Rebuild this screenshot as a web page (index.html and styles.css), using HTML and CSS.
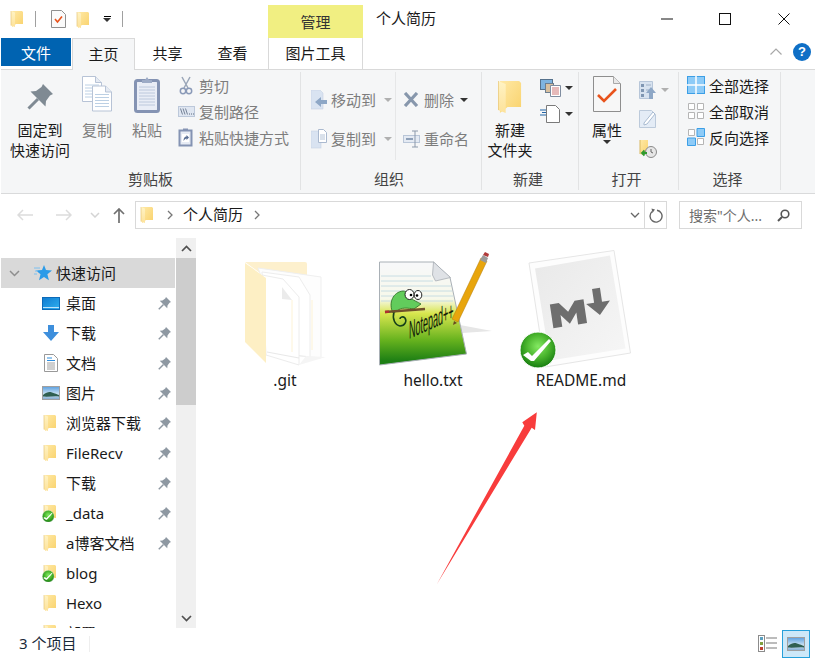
FILE: index.html
```html
<!DOCTYPE html>
<html lang="zh-CN">
<head>
<meta charset="utf-8">
<title>个人简历</title>
<link rel="stylesheet" href="styles.css">
</head>
<body>
<svg class="defs" aria-hidden="true">
  <defs>
    <linearGradient id="fold" x1="0" y1="0" x2="1" y2="1"><stop offset="0" stop-color="#ffe9a6"/><stop offset="1" stop-color="#f9d26c"/></linearGradient>
    <linearGradient id="flap" x1="0" y1="0" x2="0" y2="1"><stop offset="0" stop-color="#fff3c4"/><stop offset="1" stop-color="#fde29a"/></linearGradient>
    <radialGradient id="ball" cx=".5" cy=".4" r=".6"><stop offset="0" stop-color="#84ea62"/><stop offset=".55" stop-color="#48b32c"/><stop offset="1" stop-color="#167c10"/></radialGradient>
    <linearGradient id="npp" x1="0" y1="0" x2="0" y2="1"><stop offset="0" stop-color="#f7f8fa"/><stop offset=".36" stop-color="#f7f8ea"/><stop offset=".5" stop-color="#d8e64e"/><stop offset=".76" stop-color="#66b21e"/><stop offset=".96" stop-color="#1d7f14"/></linearGradient>
    <linearGradient id="mdbg" x1="0" y1="0" x2="1" y2="1"><stop offset="0" stop-color="#e9e9e9"/><stop offset="1" stop-color="#f6f6f6"/></linearGradient>
    <linearGradient id="desk" x1="0" y1="0" x2="1" y2="1"><stop offset="0" stop-color="#0f7bd0"/><stop offset="1" stop-color="#2fb0f0"/></linearGradient>
    <linearGradient id="sky" x1="0" y1="0" x2="0" y2="1"><stop offset="0" stop-color="#5a9fe0"/><stop offset=".6" stop-color="#cfe4f2"/><stop offset="1" stop-color="#7fa8d0"/></linearGradient>
    <symbol id="folder" viewBox="0 0 18 18">
      <path d="M3 1h10l1 1v12H7L3 17z" fill="url(#fold)"/>
      <path d="M2 1l4 1.5V17l-4-1.5z" fill="url(#flap)"/>
      <path d="M2 1v14.5" stroke="#e6c57a" stroke-width=".7" fill="none"/>
    </symbol>
    <symbol id="pin" viewBox="0 0 26 26">
      <path d="M16 0l10 10-3 1.5-4 5.5-.5 5.5L3.500 7.500 9 7l5.500-4z" fill="currentColor"/>
      <path d="M11 15L1.500 24.500" stroke="currentColor" stroke-width="3" fill="none"/>
    </symbol>
    <symbol id="badge" viewBox="0 0 38 38">
      <circle cx="19" cy="19" r="18" fill="url(#ball)" stroke="#fff" stroke-width="1"/>
      <path d="M4 24l5-3 4 4L30 8l2 2-17 20h-3z" fill="#fff"/>
    </symbol>
    <symbol id="doc" viewBox="0 0 20 26">
      <path d="M.5.500h13l6 6v19H.5z" fill="#fff" stroke="#b7c3d6"/>
      <path d="M13.500.5v6h6" fill="#e6ebf3" stroke="#b7c3d6"/>
      <path d="M3 9h14M3 12h14M3 15h14M3 18h14M3 21h14" stroke="#bcd0e4"/>
    </symbol>
    <symbol id="photo" viewBox="0 0 18 14">
      <rect x=".5" y=".5" width="17" height="13" fill="url(#sky)" stroke="#a0a0a0"/>
      <path d="M1 9c4-3 6-3.500 9-2.500 3 .8 5 2 7 2.500v1.500C12 10 6 11 1 10.500z" fill="#2f5f50"/>
    </symbol>
    <symbol id="grid-on" viewBox="0 0 18 18">
      <rect x=".5" y=".5" width="17" height="17" fill="#8ecbf7" stroke="#3c9fe6"/>
      <path d="M9 0v18M0 9h18" stroke="#fff" stroke-width="1.500"/>
    </symbol>
  </defs>
</svg>

<div class="window">
  <header class="titlebar">
    <svg class="qa-folder"><use href="#folder"/></svg>
    <span class="qa-sep"></span>
    <svg class="qa-prop" viewBox="0 0 15 18"><path d="M.5.500h10l4 4v13H.5z" fill="#fafafa" stroke="#8f8f8f"/><path d="M4 9l2.500 3L11 6.500" fill="none" stroke="#e8531c" stroke-width="1.600"/></svg>
    <svg class="qa-folder2"><use href="#folder"/></svg>
    <span class="qa-more"><span class="qa-bar"></span><span class="caret dark"></span></span>
    <span class="qa-sep second"></span>
    <div class="tool-head">管理</div>
    <div class="win-title">个人简历</div>
    <div class="win-controls">
      <span class="win-btn"><svg width="12" height="12" viewBox="0 0 12 12"><path d="M0 6h12" stroke="#111"/></svg></span>
      <span class="win-btn"><svg width="12" height="12" viewBox="0 0 12 12"><rect x=".5" y=".5" width="11" height="11" fill="none" stroke="#111"/></svg></span>
      <span class="win-btn"><svg width="12" height="12" viewBox="0 0 12 12"><path d="M.5.500l11 11M11.500.500l-11 11" stroke="#111"/></svg></span>
    </div>
  </header>

  <nav class="tabs">
    <span class="tab tab-file">文件</span>
    <span class="tab tab-active">主页</span>
    <span class="tab">共享</span>
    <span class="tab">查看</span>
    <span class="tab tab-tool">图片工具</span>
    <span class="tabs-right">
      <svg width="12" height="7" viewBox="0 0 12 7"><path d="M.5 6.500L6 1l5.500 5.500" fill="none" stroke="#a8a8a8" stroke-width="1.200"/></svg>
      <span class="help">?</span>
    </span>
  </nav>

  <section class="ribbon">
    <div class="group g-clip">
      <div class="group-body">
        <div class="big b-pin">
          <span class="big-ico"><svg class="pin-lg"><use href="#pin"/></svg></span>
          <span class="big-text">固定到<br>快速访问</span>
        </div>
        <div class="big b-copy off">
          <span class="big-ico">
            <svg width="30" height="36" viewBox="0 0 30 36"><use href="#doc" x="0" y="0" width="20" height="26"/><use href="#doc" x="10" y="9" width="20" height="27"/></svg>
          </span>
          <span class="big-text">复制</span>
        </div>
        <div class="big b-paste off">
          <span class="big-ico">
            <svg width="26" height="37" viewBox="0 0 26 37"><rect x="1.500" y="4.500" width="23" height="31" rx="2" fill="#e9edf6" stroke="#8493b3" stroke-width="3"/><path d="M5 11h16M5 14h16M5 17h16M5 20h16M5 23h16M5 26h16M5 29h16" stroke="#bcc8dc"/><path d="M8 7V4h3l2-3 2 3h3v3z" fill="#9dabc6"/></svg>
          </span>
          <span class="big-text">粘贴</span>
        </div>
        <div class="col c-clip off">
          <div class="mini">
            <span class="mini-ico"><svg width="16" height="19" viewBox="0 0 16 19"><path d="M4 1l6 11M12 1L6 12" stroke="#9aa6b8" stroke-width="1.500" fill="none"/><circle cx="5" cy="15" r="2.700" fill="none" stroke="#8a9ab8" stroke-width="1.500"/><circle cx="11" cy="15" r="2.700" fill="none" stroke="#8a9ab8" stroke-width="1.500"/></svg></span>
            <span>剪切</span>
          </div>
          <div class="mini">
            <span class="mini-ico"><svg width="17" height="11" viewBox="0 0 17 11"><rect x=".5" y=".5" width="16" height="10" fill="#dfe6f1" stroke="#bcc8da"/><path d="M2.500 2.500l2 6M5 2.500l2 6M7.500 2.500l2 6" stroke="#5a6a80" stroke-width=".8"/><path d="M11 8h1M13 8h1M15 8h1" stroke="#5a6a80"/></svg></span>
            <span>复制路径</span>
          </div>
          <div class="mini">
            <span class="mini-ico"><svg width="16" height="20" viewBox="0 0 16 20"><rect x="1.500" y="3.500" width="12" height="15" fill="#e6ebf4" stroke="#8493b3" stroke-width="2"/><path d="M5 3V1.500h5V3z" fill="#8493b3"/><rect x="4" y="7" width="7" height="8" fill="#fff"/><path d="M5.500 14c0-3 1-4.500 3-4.500V8l2.500 2.500L8.500 13v-1.500c-1 0-2 1-3 2.500z" fill="#5a6f94"/></svg></span>
            <span>粘贴快捷方式</span>
          </div>
        </div>
      </div>
      <div class="group-label">剪贴板</div>
    </div>

    <div class="group g-org">
      <div class="group-body">
        <div class="col c-org off">
          <div class="mini tall">
            <span class="org-ico"><svg width="16" height="20" viewBox="0 0 16 20"><path d="M0 0h9l3 3v16H0z" fill="#d9e3f1" stroke="#c6d2e3" stroke-width=".6"/><path d="M16 10h-6V7l-6 5 6 5v-3h6z" fill="#8ea7c6"/></svg></span>
            <span>移动到</span><span class="caret"></span>
          </div>
          <div class="mini tall">
            <span class="org-ico"><svg width="16" height="20" viewBox="0 0 16 20"><rect x="0" y="2" width="10" height="17" fill="#d9e3f1" stroke="#c6d2e3" stroke-width=".6"/><path d="M7.500.500h5l3 3v10h-8z" fill="#fff" stroke="#aab9cf"/><path d="M9 6h5M9 8h5M9 10h5" stroke="#b4c3d6"/></svg></span>
            <span>复制到</span><span class="caret"></span>
          </div>
        </div>
        <div class="col c-org2 off">
          <div class="mini tall">
            <span class="del-ico"><svg width="16" height="15" viewBox="0 0 16 15"><path d="M2 1l12 13M14 1L2 14" stroke="#8797ac" stroke-width="3.200"/></svg></span>
            <span>删除</span><span class="caret dark gap"></span>
          </div>
          <div class="mini tall">
            <span class="del-ico"><svg width="18" height="18" viewBox="0 0 18 18"><rect x=".5" y="5.500" width="16" height="7" fill="#e4eaf3" stroke="#b9c6d8"/><path d="M3 9h7" stroke="#8ea0b8" stroke-width="2"/><path d="M9 1h6M12 1v16M9 17h6" stroke="#8c99ab" fill="none"/></svg></span>
            <span>重命名</span>
          </div>
        </div>
      </div>
      <div class="group-label">组织</div>
    </div>

    <div class="group g-new">
      <div class="group-body">
        <div class="big b-new">
          <span class="big-ico"><svg class="folder-lg" viewBox="2 1 13 17" preserveAspectRatio="none"><use href="#folder" x="0" y="0" width="18" height="18"/></svg></span>
          <span class="big-text">新建<br>文件夹</span>
        </div>
        <div class="col c-new">
          <div class="mini icon-row">
            <svg width="21" height="18" viewBox="0 0 21 18"><rect x=".5" y=".5" width="12" height="10" fill="#7fb4e0" stroke="#55718c"/><rect x="5.500" y="4.500" width="8" height="9" fill="#d8c0a0" stroke="#6e7f90"/><path d="M10.500 6.500h10v11h-10z" fill="#fff" stroke="#7f8da0"/><path d="M12 9h7M12 11h7M12 13h7M12 15h7" stroke="#c05050" stroke-width=".8"/></svg>
            <span class="caret dark"></span>
          </div>
          <div class="mini icon-row">
            <svg width="21" height="18" viewBox="0 0 21 18"><path d="M6.500.500h9l4 4v13h-13z" fill="#fff" stroke="#7a7a7a"/><path d="M0 5h6M2 7.500h4M0 10h6" stroke="#2466a8" stroke-width="1.200"/></svg>
            <span class="caret dark"></span>
          </div>
        </div>
      </div>
      <div class="group-label">新建</div>
    </div>

    <div class="group g-open">
      <div class="group-body">
        <div class="big b-prop">
          <span class="big-ico">
            <svg width="28" height="36" viewBox="0 0 28 36"><path d="M.5.500h20l7 7v28H.5z" fill="#f7f7f7" stroke="#8e8e8e"/><path d="M20.500.5v7h7" fill="#e8e8e8" stroke="#a8a8a8"/><path d="M5 19l6 6L23 13" fill="none" stroke="#e8531c" stroke-width="2.600"/></svg>
          </span>
          <span class="big-text">属性</span>
          <span class="caret dark prop-caret"></span>
        </div>
        <div class="col c-open off">
          <div class="mini open-row">
            <svg width="18" height="18" viewBox="0 0 18 18"><path d="M.5.500h13v17H.5z" fill="#d7e2ef" stroke="#b7c6d9"/><path d="M2 3h3v3H2zM2 8h3v3H2zM2 13h3v3H2z" fill="#7f96b2"/><path d="M7 4h5M7 9h3" stroke="#9eb0c6"/><path d="M12 6l5 6h-3v6h-4v-6H7z" fill="#8ea7c6"/></svg>
            <span class="caret"></span>
          </div>
          <div class="mini open-row">
            <svg width="18" height="18" viewBox="0 0 18 18"><path d="M.5.500h12l4 4v13H.5z" fill="#e4ecf6" stroke="#bccadb"/><path d="M5 13L14 2l2 2-8 10-3 1z" fill="#fff" stroke="#a9bbd1"/></svg>
          </div>
          <div class="mini open-row">
            <svg width="18" height="18" viewBox="0 0 18 18"><path d="M1 0h8v11l-5 4-3-1z" fill="url(#fold)"/><path d="M1 0v14" stroke="#d8b860"/><circle cx="12" cy="12" r="5.500" fill="#e6e6e6" stroke="#8a8a8a"/><path d="M12 9v3l2 1" stroke="#666" fill="none"/><path d="M3 13h5M5.500 10.500L3 13l2.500 2.500" stroke="#2f9a2f" stroke-width="1.800" fill="none"/></svg>
          </div>
        </div>
      </div>
      <div class="group-label">打开</div>
    </div>

    <div class="group g-sel">
      <div class="group-body">
        <div class="col c-sel">
          <div class="mini on">
            <span class="sel-ico"><svg width="18" height="18"><use href="#grid-on"/></svg></span>
            <span>全部选择</span>
          </div>
          <div class="mini on">
            <span class="sel-ico"><svg width="18" height="18" viewBox="0 0 18 18"><path d="M1.500 1.500h6v6h-6zM10.500 1.500h6v6h-6zM1.500 10.500h6v6h-6zM10.500 10.500h6v6h-6z" fill="#fff" stroke="#b5b5b5"/></svg></span>
            <span>全部取消</span>
          </div>
          <div class="mini on">
            <span class="sel-ico"><svg width="18" height="18" viewBox="0 0 18 18"><path d="M1.500 1.500h6v6h-6zM10.500 10.500h6v6h-6z" fill="#fff" stroke="#b5b5b5"/><path d="M10 .5h7.500v8H10zM.5 10h8v7.500h-8z" fill="#8ecbf7" stroke="#3c9fe6"/></svg></span>
            <span>反向选择</span>
          </div>
        </div>
      </div>
      <div class="group-label">选择</div>
    </div>
  </section>

  <div class="addr-row">
    <span class="nav nav-back"><svg width="16" height="12" viewBox="0 0 16 12"><path d="M16 6H1M6 1L1 6l5 5" fill="none" stroke="#dcdcdc" stroke-width="1.500"/></svg></span>
    <span class="nav nav-fwd"><svg width="16" height="12" viewBox="0 0 16 12"><path d="M0 6h15M10 1l5 5-5 5" fill="none" stroke="#dcdcdc" stroke-width="1.500"/></svg></span>
    <span class="nav nav-down"><svg width="10" height="6" viewBox="0 0 10 6"><path d="M1 1l4 4 4-4" fill="none" stroke="#d4d4d4" stroke-width="1.500"/></svg></span>
    <span class="nav nav-up"><svg width="12" height="15" viewBox="0 0 12 15"><path d="M6 15V1M1 6l5-5 5 5" fill="none" stroke="#707070" stroke-width="1.700"/></svg></span>
    <div class="addr">
      <svg class="addr-folder"><use href="#folder"/></svg>
      <svg class="crumb" width="6" height="10" viewBox="0 0 6 10"><path d="M1 1l4 4-4 4" fill="none" stroke="#777" stroke-width="1.300"/></svg>
      <span class="addr-text">个人简历</span>
      <svg class="crumb" width="6" height="10" viewBox="0 0 6 10"><path d="M1 1l4 4-4 4" fill="none" stroke="#777" stroke-width="1.300"/></svg>
      <svg class="addr-chev" width="10" height="6" viewBox="0 0 10 6"><path d="M1 1l4 4 4-4" fill="none" stroke="#666" stroke-width="1.300"/></svg>
      <span class="addr-refresh"><svg width="14" height="15" viewBox="0 0 14 15"><path d="M8 2.200A6 6 0 1 1 3.200 3.500" fill="none" stroke="#666" stroke-width="1.400"/><path d="M2.500.500L6 1.500 3.500 5z" fill="#666"/></svg></span>
    </div>
    <div class="search">
      <span>搜索"个人...</span>
      <svg width="13" height="13" viewBox="0 0 13 13"><circle cx="8" cy="5" r="3.800" fill="none" stroke="#555" stroke-width="1.600"/><path d="M5 8l-4 4" stroke="#555" stroke-width="2"/></svg>
    </div>
  </div>

  <main class="main">
    <aside class="side">
      <div class="tree">
        <div class="row row-head">
          <svg class="row-chev" width="11" height="7" viewBox="0 0 11 7"><path d="M1 1l4.500 4.500L10 1" fill="none" stroke="#8e8e8e" stroke-width="1.500"/></svg>
          <svg class="row-star" width="18" height="16" viewBox="0 0 18 16"><path d="M10 0l2 5 6 .4-4.600 3.800 1.500 6L10 12l-5 3.200 1.500-6L2 5.400l6-.4z" fill="#2b9be8"/><path d="M0 3h6M1 6h3M0 9h3" stroke="#7cc0f0"/></svg>
          <span>快速访问</span>
        </div>
        <div class="row">
          <svg class="ico" viewBox="0 0 18 18"><rect x=".5" y="3.500" width="17" height="12" fill="url(#desk)" stroke="#0d6ab8"/><path d="M1 13.500h16" stroke="#bfe3fa"/></svg>
          <span>桌面</span><svg class="pin"><use href="#pin"/></svg>
        </div>
        <div class="row">
          <svg class="ico" viewBox="0 0 18 18"><path d="M6 1h6v7h5l-8 9-8-9h5z" fill="#3e8fdc"/></svg>
          <span>下载</span><svg class="pin"><use href="#pin"/></svg>
        </div>
        <div class="row">
          <svg class="ico" viewBox="0 0 18 18"><path d="M2.500.500h9l4 4v13h-13z" fill="#fff" stroke="#999"/><path d="M5 4h5M5 6.500h8" stroke="#2f8fe0" stroke-width="1.200"/><path d="M5 9h8M5 11h8M5 13h8M5 15h8" stroke="#a0a0a0"/></svg>
          <span>文档</span><svg class="pin"><use href="#pin"/></svg>
        </div>
        <div class="row">
          <svg class="ico" viewBox="0 0 18 18"><use href="#photo" x="0" y="2" width="18" height="14"/></svg>
          <span>图片</span><svg class="pin"><use href="#pin"/></svg>
        </div>
        <div class="row">
          <svg class="ico"><use href="#folder"/></svg>
          <span>浏览器下载</span><svg class="pin"><use href="#pin"/></svg>
        </div>
        <div class="row">
          <svg class="ico"><use href="#folder"/></svg>
          <span>FileRecv</span><svg class="pin"><use href="#pin"/></svg>
        </div>
        <div class="row">
          <svg class="ico"><use href="#folder"/></svg>
          <span>下载</span><svg class="pin"><use href="#pin"/></svg>
        </div>
        <div class="row">
          <svg class="ico"><use href="#folder"/><use href="#badge" x="0" y="6" width="12.500" height="12.500"/></svg>
          <span>_data</span><svg class="pin"><use href="#pin"/></svg>
        </div>
        <div class="row">
          <svg class="ico"><use href="#folder"/></svg>
          <span>a博客文档</span><svg class="pin"><use href="#pin"/></svg>
        </div>
        <div class="row">
          <svg class="ico"><use href="#folder"/><use href="#badge" x="0" y="6" width="12.500" height="12.500"/></svg>
          <span>blog</span>
        </div>
        <div class="row">
          <svg class="ico"><use href="#folder"/></svg>
          <span>Hexo</span>
        </div>
        <div class="row">
          <svg class="ico"><use href="#folder"/></svg>
          <span>部署</span>
        </div>
      </div>
      <div class="scroll">
        <span class="sb-btn"><svg width="11" height="7" viewBox="0 0 11 7"><path d="M1 6l4.500-4.500L10 6" fill="none" stroke="#505050" stroke-width="1.700"/></svg></span>
        <span class="sb-thumb"></span>
        <span class="sb-track"></span>
        <span class="sb-btn"><svg width="11" height="7" viewBox="0 0 11 7"><path d="M1 1l4.500 4.500L10 1" fill="none" stroke="#505050" stroke-width="1.700"/></svg></span>
      </div>
    </aside>

    <section class="files">
      <div class="file">
        <svg class="file-ico" viewBox="211 250 148 120">
          <path d="M245 262h60q2 0 2 2v14h-40z" fill="#fdf0cd"/>
          <path d="M258 268l63 9v81l-30-3z" fill="#fdfdfd" stroke="#efefef"/>
          <path d="M262 272l37 5 11 18v62l-44-6z" fill="#fff" stroke="#ededed"/>
          <path d="M262 275l21 4 16 18v68l-33-10z" fill="#fff" stroke="#ececec"/>
          <path d="M282 287l10 13-10-1z" fill="#ebebeb"/>
          <path d="M292 300v52M312 300v50" stroke="#fdf3d6" fill="none"/>
          <path d="M267 352l32 6" stroke="#e8e8e8"/>
          <path d="M245 263l21 15v85l-21-21z" fill="#fdefc4"/>
          <path d="M299 365l27-8-20-1z" fill="#f5f5f5"/>
        </svg>
        <span class="file-name">.git</span>
      </div>
      <div class="file">
        <svg class="file-ico" viewBox="359 250 148 120">
          <path d="M460 325l32 6-30 2z" fill="#e6e6e6"/>
          <path d="M379.500 262h54l16.500 15.500 16.500 76.500-87 11z" fill="url(#npp)" stroke="#a9b0b6"/>
          <path d="M433.500 262l-1 13 3 6 15-3.500z" fill="#dfe2e6" stroke="#a0a6ad" stroke-width=".7"/>
          <path d="M381 276h50M381 281h52M381 286h70M381 291h71M381 296h72M381 301h72" stroke="#bcd6e0" stroke-width=".8"/>
          <path d="M393 313c-5-10 0-21 10-22 4 0 6 4 8 7 3 3 7 4 10 6l-7 5c-6-1-13-2-17 2z" fill="#62cc5c" stroke="#2a6a22" stroke-width=".8"/>
          <path d="M394 312c-2 7 1 13 6 14 5 0 7-5 5-8-2-2-5-1-5 1" fill="none" stroke="#16401a" stroke-width="1.600"/>
          <ellipse cx="409.500" cy="294.500" rx="4.500" ry="5" fill="#fff" stroke="#222"/><ellipse cx="418" cy="295" rx="3.800" ry="4.500" fill="#fff" stroke="#222"/>
          <circle cx="411" cy="295" r="1.300"/><circle cx="417" cy="295.500" r="1.300"/>
          <path d="M385 312l40-3" stroke="#70502a" stroke-width="2.400"/>
          <path d="M385 312l4-.4" stroke="#b03030" stroke-width="2.400"/>
          <text class="npp-text" transform="translate(409 339) skewY(-24) scale(.82 2.300)">Notepad++</text>
          <path d="M452 319l29-61 6 3-29 61z" fill="#e8a50c" stroke="#b57d08" stroke-width=".5"/>
          <path d="M454 321l-1 4 4-2z" fill="#6a4a20"/>
          <path d="M480 260l3-5 5 3-2 5z" fill="#9a9a9a"/>
          <path d="M483 255l2-3 4 2-1 3z" fill="#b03a3a"/>
        </svg>
        <span class="file-name">hello.txt</span>
      </div>
      <div class="file">
        <svg class="file-ico" viewBox="507 250 148 120">
          <path d="M529 263l85-12.500 16.500 102.500-85.500 14z" fill="#fdfdfd" stroke="#e6e6e6"/>
          <path d="M535 268.500l75-13 15.500 93-75.500 12z" fill="url(#mdbg)"/>
          <g transform="rotate(-8.500 580 310)" fill="#6e6e6e">
            <path d="M551 300h9l8 10 8-10h9v24h-9v-12l-8 10-8-10v12h-9z"/>
            <path d="M595 291h8v14h8l-12 13-12-13h8z"/>
          </g>
          <use href="#badge" x="519" y="331" width="38" height="38"/>
        </svg>
        <span class="file-name">README.md</span>
      </div>
    </section>
  </main>

  <footer class="status">
    <span class="status-text">3 个项目</span>
    <span class="status-sep"></span>
    <span class="view-list">
      <svg width="19" height="17" viewBox="0 0 19 17"><rect x=".5" y=".5" width="6" height="16" fill="#fff" stroke="#8c8c8c"/><path d="M2 2h3v3H2z" fill="#5ba0c0"/><path d="M2 7h3v3H2z" fill="#80a040"/><path d="M2 12h3v3H2z" fill="#c04030"/><path d="M8 3h11M8 8h11M8 13h11" stroke="#7a7a7a" stroke-width="1.200"/></svg>
    </span>
    <span class="view-on">
      <svg width="18" height="14"><use href="#photo"/></svg>
    </span>
  </footer>

  <svg class="red-arrow" width="110" height="180" viewBox="430 408 110 180"><path d="M437 584L524.300 425.700 522.300 422.300 536.800 412.300 535 430 531.700 427.700z" fill="#f83c3c"/></svg>
</div>
</body>
</html>
```

FILE: styles.css
```css
* { box-sizing: border-box; }
html, body { margin: 0; height: 100%; }
body { background: #fff; font-family: "Noto Sans", "Noto Sans CJK SC", sans-serif; font-size: 15px; color: #1a1a1a; overflow: hidden; }
svg { display: block; flex: none; }
.defs { width: 0; height: 0; }
.window { position: relative; width: 815px; height: 659px; padding-left: 1px; display: flex; flex-direction: column; overflow: hidden; }

/* title bar */
.titlebar { height: 38px; flex: none; display: flex; align-items: center; padding-right: 2px; }
.qa-folder { width: 18px; height: 18px; margin: 0 0 0 8px; }
.qa-sep { width: 1px; height: 16px; background: #a0a0a0; margin-left: 8px; }
.qa-sep.second { margin-left: 10px; }
.qa-prop { width: 15px; height: 18px; margin-left: 15px; }
.qa-folder2 { width: 18px; height: 18px; margin: 1px 0 0 9px; }
.qa-more { width: 10px; margin-left: 9px; display: flex; flex-direction: column; align-items: center; gap: 1px; }
.qa-bar { width: 7px; height: 1px; background: #000; }
.tool-head { width: 95px; height: 33px; margin: 5px 0 0 145px; background: #f1ef82; display: flex; align-items: center; justify-content: center; color: #333; }
.win-title { margin: 0 0 3px 13px; }
.win-controls { margin-left: auto; display: flex; }
.win-btn { width: 58.500px; height: 38px; display: flex; align-items: center; justify-content: center; }

/* caret */
.caret { display: inline-block; width: 0; height: 0; border: 4px solid transparent; border-top-color: #b0b0b0; border-bottom: 0; flex: none; }
.caret.dark { border-top-color: #333; }

/* tabs */
.tabs { height: 32px; flex: none; display: flex; border-bottom: 1px solid #d9d9d9; position: relative; }
.tab { width: 65px; display: flex; align-items: center; justify-content: center; padding-bottom: 3px; }
.tab-file { width: 70px; height: 28px; background: #0063b1; color: #fff; padding-bottom: 0; }
.tab-active { width: 63px; height: 32px; margin-left: 1px; background: #f5f6f7; border: 1px solid #d9d9d9; border-bottom: 0; }
.tab-tool { width: 95px; margin-left: 3px; border-left: 1px solid #d9d9d9; border-right: 1px solid #d9d9d9; }
.tabs-right { margin-left: auto; display: flex; align-items: center; gap: 11px; padding: 0 4px 4px 0; }
.help { width: 18px; height: 18px; border-radius: 50%; background: #0f6fc6; color: #fff; font: bold 13px/18px "Liberation Sans", sans-serif; text-align: center; }

/* ribbon */
.ribbon { height: 124px; flex: none; background: #f5f6f7; border-bottom: 1px solid #d9dadb; display: flex; padding-top: 2px; }
.group { height: 118px; border-right: 1px solid #e2e3e4; display: flex; flex-direction: column; flex: none; }
.group-body { height: 98px; display: flex; }
.group-label { height: 20px; line-height: 19px; text-align: center; color: #444; }
.g-clip { width: 300px; }
.g-org { width: 181px; }
.g-new { width: 97px; }
.g-open { width: 100px; }
.g-sel { width: 102px; }
.g-org .group-label { padding-right: 4px; }
.g-new .group-label { padding-right: 4px; }
.g-open .group-label { padding-right: 4px; }
.g-sel .group-label { padding-right: 4px; }

.big { display: flex; flex-direction: column; align-items: center; padding-top: 4px; line-height: 20px; flex: none; position: relative; }
.big-ico { height: 44px; display: flex; align-items: flex-start; justify-content: center; }
.big-text { text-align: center; }
.off { color: #7d7d7d; }
.b-pin { width: 78px; }
.pin-lg { width: 26px; height: 26px; margin-top: 8px; color: #7f8a93; }
.b-copy { width: 36px; }
.b-paste { width: 38px; margin-left: 13px; }
.b-new { width: 56px; }
.folder-lg { width: 25px; height: 34px; margin-top: 5px; }
.b-prop { width: 56px; }

.col { display: flex; flex-direction: column; flex: none; }
.mini { height: 26px; display: flex; align-items: center; white-space: nowrap; }
.mini-ico { width: 21px; flex: none; }
.c-clip { margin: 0 0 0 12px; }
.tall { height: 39px; }
.c-org { padding: 8px 0 0 10px; width: 95px; border-right: 1px solid #e6e7e8; height: 88px; }
.org-ico { width: 20px; flex: none; }
.c-org .caret { margin-left: 8px; }
.c-org2 { padding: 8px 0 0 7px; }
.del-ico { width: 21px; flex: none; }
.caret.gap { margin-left: 6px; }
.c-new { padding: 3px 0 0 2px; }
.icon-row { gap: 4px; height: 26px; }
.c-open { padding: 3px 0 0 4px; }
.open-row { height: 29.500px; gap: 4px; }
.c-sel { padding: 0 0 0 8px; }
.sel-ico { width: 22px; flex: none; }
.on { color: #1a1a1a; }

/* address */
.addr-row { height: 35px; flex: none; display: flex; align-items: flex-end; }
.nav { height: 28px; display: flex; align-items: center; flex: none; }
.nav-back { margin-left: 16px; }
.nav-fwd { margin-left: 23px; }
.nav-down { margin-left: 18px; }
.nav-up { margin-left: 13px; }
.addr { width: 532px; height: 28px; margin-left: 10px; border: 1px solid #d9d9d9; display: flex; align-items: center; padding-left: 3px; line-height: 22px; }
.addr-folder { width: 18px; height: 18px; }
.crumb { margin-left: 10px; }
.addr-text { margin: 0 0 2px 10px; color: #1a1a1a; }
.addr-text + .crumb { margin-left: 11px; }
.addr-chev { margin-left: auto; }
.addr-refresh { width: 22px; height: 26px; margin-left: 4px; border-left: 1px solid #d9d9d9; display: flex; align-items: center; justify-content: center; }
.search { width: 123px; height: 28px; margin-left: 12px; border: 1px solid #d9d9d9; display: flex; align-items: center; justify-content: space-between; padding: 0 11px 0 9px; color: #6d6d6d; font-size: 14px; white-space: nowrap; }

/* main */
.main { height: 390px; margin-top: 9px; flex: none; display: flex; }
.side { width: 195px; flex: none; display: flex; overflow: hidden; }
.tree { width: 174px; padding-top: 20px; flex: none; }
.row { height: 30px; display: flex; align-items: center; padding-left: 41px; white-space: nowrap; line-height: 28px; }
.row span { margin-bottom: 1px; }
.row-head { background: #d9d9d9; padding-left: 8px; }
.row-chev { margin-right: 14px; }
.row-star { margin-right: 4px; }
.ico { width: 18px; height: 18px; margin-right: 6px; }
.pin { width: 13px; height: 13px; margin-left: auto; margin-right: 4px; color: #8e98a2; }
.scroll { width: 20px; margin-left: 1px; display: flex; flex-direction: column; background: #f0f0f0; flex: none; }
.sb-btn { height: 20px; display: flex; align-items: center; justify-content: center; flex: none; }
.sb-thumb { height: 147px; background: #cdcdcd; flex: none; }
.sb-track { flex: 1; }
.files { flex: 1; display: flex; padding: 12px 0 0 15px; }
.file { width: 148px; display: flex; flex-direction: column; align-items: center; }
.file-ico { width: 148px; height: 120px; }
.file-name { line-height: 20px; font-size: 15.500px; }
.npp-text { font: 11px "Liberation Sans", sans-serif; fill: #12200a; }

/* status */
.status { flex: 1; display: flex; align-items: center; }
.status-text { margin: 0 0 3px 18px; color: #1a2a3a; }
.status-sep { width: 1px; height: 16px; background: #eeeeee; margin-left: 13px; }
.view-list { margin-left: auto; }
.view-on { width: 28px; height: 28px; margin: 0 5px 0 5px; background: #cde8f8; border: 1px solid #26a0da; display: flex; align-items: center; justify-content: center; }

/* overlay annotation */
.red-arrow { position: absolute; left: 430px; top: 408px; }
```
